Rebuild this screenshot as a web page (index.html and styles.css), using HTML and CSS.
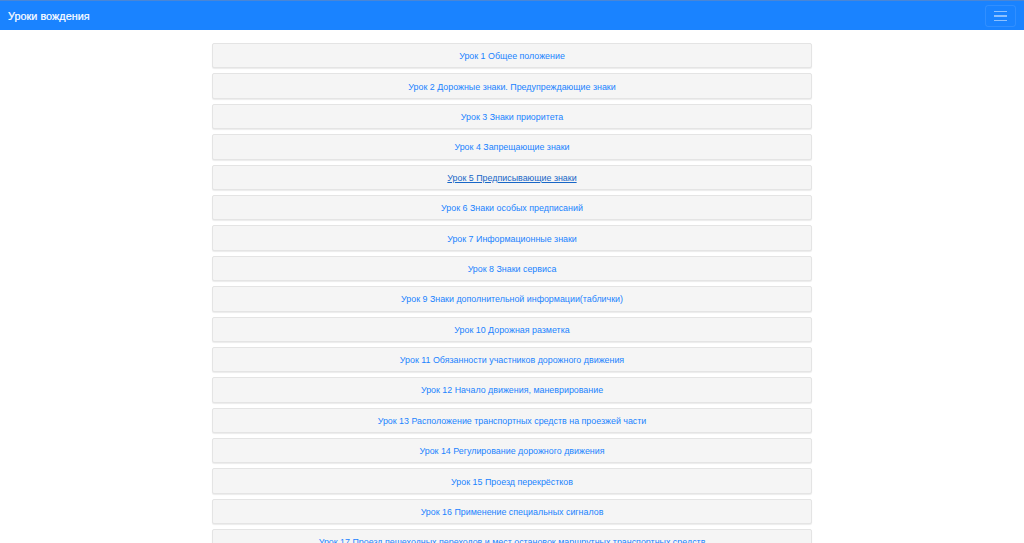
FILE: index.html
```html
<!DOCTYPE html>
<html lang="ru">
<head>
<meta charset="utf-8">
<title>Уроки вождения</title>
<link rel="stylesheet" href="styles.css">
</head>
<body>
<nav class="navbar">
  <a class="brand" href="#">Уроки вождения</a>
  <button class="toggler" type="button" aria-label="Меню">
    <span class="bar"></span><span class="bar"></span><span class="bar"></span>
  </button>
</nav>
<main class="lessons">
  <a class="lesson" href="#">Урок 1 Общее положение</a>
  <a class="lesson" href="#">Урок 2 Дорожные знаки. Предупреждающие знаки</a>
  <a class="lesson" href="#">Урок 3 Знаки приоритета</a>
  <a class="lesson" href="#">Урок 4 Запрещающие знаки</a>
  <a class="lesson hover" href="#">Урок 5 Предписывающие знаки</a>
  <a class="lesson" href="#">Урок 6 Знаки особых предписаний</a>
  <a class="lesson" href="#">Урок 7 Информационные знаки</a>
  <a class="lesson" href="#">Урок 8 Знаки сервиса</a>
  <a class="lesson" href="#">Урок 9 Знаки дополнительной информации(таблички)</a>
  <a class="lesson" href="#">Урок 10 Дорожная разметка</a>
  <a class="lesson" href="#">Урок 11 Обязанности участников дорожного движения</a>
  <a class="lesson" href="#">Урок 12 Начало движения, маневрирование</a>
  <a class="lesson" href="#">Урок 13 Расположение транспортных средств на проезжей части</a>
  <a class="lesson" href="#">Урок 14 Регулирование дорожного движения</a>
  <a class="lesson" href="#">Урок 15 Проезд перекрёстков</a>
  <a class="lesson" href="#">Урок 16 Применение специальных сигналов</a>
  <a class="lesson" href="#">Урок 17 Проезд пешеходных переходов и мест остановок маршрутных транспортных средств</a>
</main>
</body>
</html>
```
FILE: styles.css
```css
html, body {
  margin: 0;
  padding: 0;
  background: #ffffff;
  font-family: "Liberation Sans", Arial, sans-serif;
}

.navbar {
  box-sizing: border-box;
  height: 30px;
  background: #1a83ff;
  border-top: 1px solid #4a86d6;
  display: flex;
  align-items: center;
  justify-content: space-between;
  padding: 0 8px 0 8px;
}

.brand {
  color: #ffffff;
  text-decoration: none;
  font-size: 10.8px;
  font-weight: 400;
  letter-spacing: 0.05px;
  -webkit-text-stroke: 0.2px #ffffff;
}

.toggler {
  box-sizing: border-box;
  width: 31px;
  height: 22px;
  padding: 0;
  margin-top: 1px;
  background: transparent;
  border: 1px solid rgba(255, 255, 255, 0.1);
  border-radius: 3px;
  display: flex;
  flex-direction: column;
  align-items: center;
  justify-content: center;
  gap: 3px;
}

.toggler .bar {
  display: block;
  width: 13px;
  height: 1.3px;
  background: rgba(255, 255, 255, 0.5);
}

.lessons {
  width: 600px;
  margin: 13px auto 0;
  display: flex;
  flex-direction: column;
  gap: 5px;
}

.lesson {
  box-sizing: border-box;
  height: 25.4px;
  padding-top: 1px;
  display: flex;
  align-items: center;
  justify-content: center;
  background: #f5f5f5;
  border: 1px solid #e4e4e4;
  border-radius: 2px;
  box-shadow: 0 1px 1px rgba(0, 0, 0, 0.08);
  color: #1a83ff;
  font-size: 8.9px;
  text-decoration: none;
  white-space: nowrap;
}

.lesson.hover {
  color: #1766c7;
  text-decoration: underline;
}
```
